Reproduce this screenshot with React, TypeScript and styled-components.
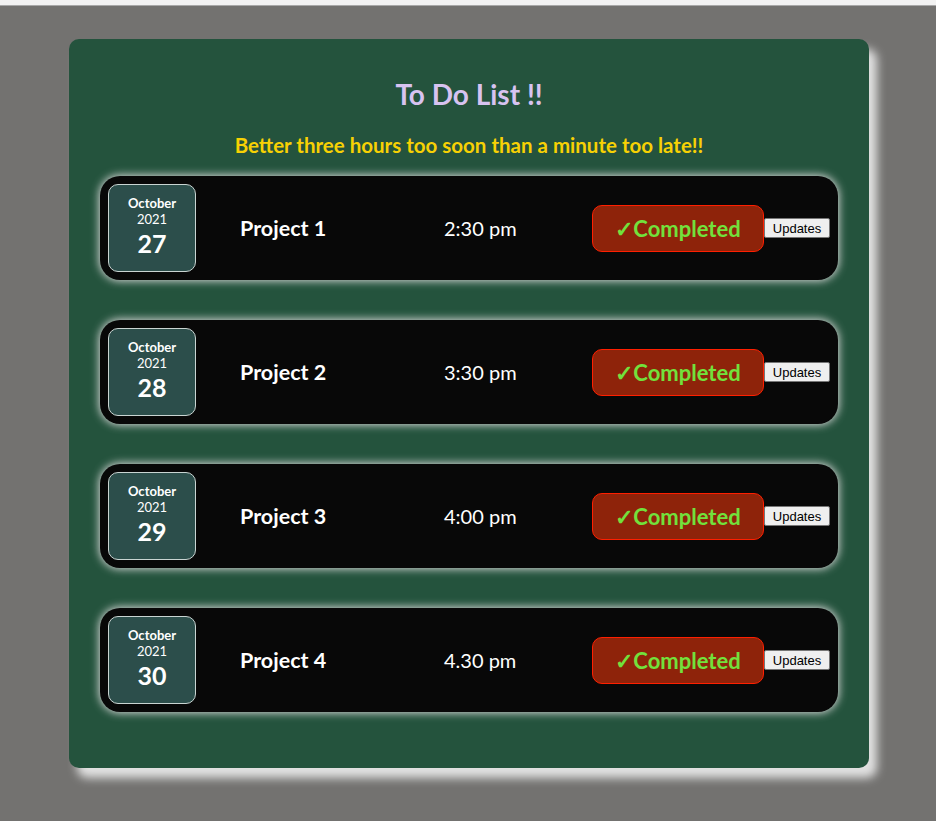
import React from "react";
import styled, { createGlobalStyle } from "styled-components";

const GlobalStyle = createGlobalStyle`
  html, body {
    margin: 0;
    padding: 0;
    background: #737270;
    font-family: Lato, "Open Sans", sans-serif;
  }
`;

const Page = styled.div`
  min-height: 821px;
  box-sizing: border-box;
  padding-bottom: 53px;
`;

const TopStrip = styled.div`
  height: 5px;
  background: #f2f2f2;
  border-bottom: 1px solid #a8a8a8;
`;

const Card = styled.main`
  width: 800px;
  box-sizing: border-box;
  margin: 33px 0 0 69px;
  background: #24533d;
  border-radius: 10px;
  padding: 38px 31px 56px;
  box-shadow: 8px 10px 10px #e2e2e2;
`;

const Title = styled.h1`
  margin: 0;
  text-align: center;
  color: #d7c3f1;
  font-size: 28px;
  line-height: 34px;
  font-weight: 700;
`;

const Subtitle = styled.h3`
  margin: 22px 0 19px;
  text-align: center;
  color: #f7d104;
  font-size: 20.5px;
  line-height: 24px;
  font-weight: 700;
`;

const List = styled.div`
  display: flex;
  flex-direction: column;
  gap: 40px;
`;

const Row = styled.div`
  display: flex;
  align-items: center;
  height: 104px;
  box-sizing: border-box;
  padding: 8px;
  background: #080808;
  border-radius: 20px;
  box-shadow: 0 0 8px 1px #d8d8d8;
`;

const DateBox = styled.div`
  width: 88px;
  height: 88px;
  box-sizing: border-box;
  border: 1px solid #c9d4d2;
  border-radius: 10px;
  background: #2c4e4b;
  color: #fff;
  display: flex;
  flex-direction: column;
  align-items: center;
  padding-top: 10px;
`;

const Month = styled.div`
  font-size: 13px;
  font-weight: 700;
  line-height: 16px;
`;

const Year = styled.div`
  font-size: 13px;
  line-height: 16px;
`;

const Day = styled.div`
  font-size: 25px;
  font-weight: 700;
  line-height: 32px;
`;

const ProjectName = styled.div`
  margin-left: 44px;
  width: 204px;
  color: #fff;
  font-size: 21.5px;
  font-weight: 700;
`;

const Time = styled.div`
  width: 148px;
  color: #fff;
  font-size: 20px;
`;

const StatusButton = styled.button`
  width: 172px;
  height: 47px;
  box-sizing: border-box;
  border: 1px solid #ff1f00;
  border-radius: 10px;
  background: #8e230a;
  color: #72e13c;
  font-family: Lato, "Open Sans", sans-serif;
  font-size: 22px;
  font-weight: 700;
  padding: 0;
  cursor: pointer;
`;

const UpdateButton = styled.button`
  width: 66px;
  height: 20px;
  box-sizing: border-box;
  font-family: Arial, "Liberation Sans", sans-serif;
  font-size: 13px;
  color: #000;
  background: #efefef;
  border: 1px solid #767676;
  border-radius: 2px;
  padding: 0;
`;

const todos = [
  { day: "27", name: "Project 1", time: "2:30 pm" },
  { day: "28", name: "Project 2", time: "3:30 pm" },
  { day: "29", name: "Project 3", time: "4:00 pm" },
  { day: "30", name: "Project 4", time: "4.30 pm" },
];

export default function App() {
  return (
    <Page>
      <GlobalStyle />
      <TopStrip />
      <Card>
        <Title>To Do List !!</Title>
        <Subtitle>Better three hours too soon than a minute too late!!</Subtitle>
        <List>
          {todos.map((t) => (
            <Row key={t.name}>
              <DateBox>
                <Month>October</Month>
                <Year>2021</Year>
                <Day>{t.day}</Day>
              </DateBox>
              <ProjectName>{t.name}</ProjectName>
              <Time>{t.time}</Time>
              <StatusButton>✓Completed</StatusButton>
              <UpdateButton>Updates</UpdateButton>
            </Row>
          ))}
        </List>
      </Card>
    </Page>
  );
}
